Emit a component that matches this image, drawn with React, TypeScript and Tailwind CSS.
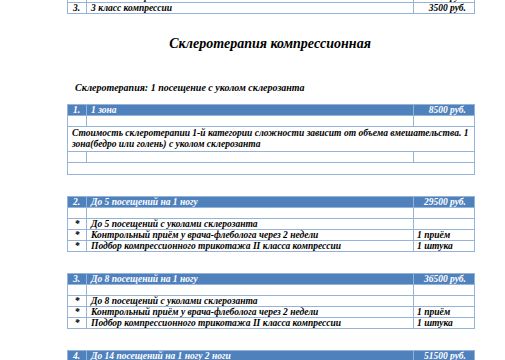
import React from "react";

const cell = "border border-[#95b3d7] p-0 h-[11px] leading-[10px] align-middle";
const head = "bg-[#4f81bd] text-white";

type Item = { text: string; qty?: string };

function Cols() {
  return (
    <colgroup>
      <col className="w-[19px]" />
      <col className="w-[327px]" />
      <col className="w-[61px]" />
    </colgroup>
  );
}

function HeadRow({ n, title, price }: { n: string; title: string; price: string }) {
  return (
    <tr>
      <td className={`${cell} ${head} pl-[5px]`}>{n}</td>
      <td className={`${cell} ${head} pl-[4px]`}>{title}</td>
      <td className={`${cell} ${head} pr-[8px] text-right`}>{price}</td>
    </tr>
  );
}

function EmptyRow() {
  return (
    <tr>
      <td className={cell}></td>
      <td className={cell}></td>
      <td className={cell}></td>
    </tr>
  );
}

function Package({ n, title, price, items }: { n: string; title: string; price: string; items: Item[] }) {
  return (
    <table className="w-[407px] table-fixed border-collapse">
      <Cols />
      <tbody>
        <HeadRow n={n} title={title} price={price} />
        <EmptyRow />
        {items.map((it) => (
          <tr key={it.text}>
            <td className={`${cell} text-center`}>*</td>
            <td className={`${cell} pl-[4px]`}>{it.text}</td>
            <td className={`${cell} pl-[3px]`}>{it.qty}</td>
          </tr>
        ))}
      </tbody>
    </table>
  );
}

export default function App() {
  return (
    <div
      className="h-[360px] w-[505px] overflow-hidden bg-white text-[9.5px] font-bold italic text-black"
      style={{ fontFamily: '"Liberation Serif", "Times New Roman", serif' }}
    >
      <div className="-mt-[9px] pl-[67px]">
        {/* tail of the previous table */}
        <table className="w-[407px] table-fixed border-collapse">
          <Cols />
          <tbody>
            <tr>
              <td className={`${cell} pl-[5px]`}>2.</td>
              <td className={`${cell} pl-[4px]`}>2 класс компрессии</td>
              <td className={`${cell} pr-[8px] text-right`}>3000 руб.</td>
            </tr>
            <tr>
              <td className={`${cell} pl-[5px]`}>3.</td>
              <td className={`${cell} pl-[4px]`}>3 класс компрессии</td>
              <td className={`${cell} pr-[8px] text-right`}>3500 руб.</td>
            </tr>
          </tbody>
        </table>
      </div>

      <h2 className="mt-[21px] pl-[35px] text-center text-[14px] leading-[18px]">Склеротерапия компрессионная</h2>

      <div className="pl-[75px] pt-[29px] text-[10px] leading-[12px]">Склеротерапия: 1 посещение с уколом склерозанта</div>

      <div className="flex flex-col gap-[21px] pl-[67px] pt-[10px]">
        <table className="w-[407px] table-fixed border-collapse">
          <Cols />
          <tbody>
            <HeadRow n="1." title="1 зона" price="8500 руб." />
            <EmptyRow />
            <tr>
              <td colSpan={3} className="border border-[#95b3d7] px-[4px] py-[1px] leading-[11px]">
                Стоимость склеротерапии 1-й категории сложности зависит от объема вмешательства. 1 зона(бедро или голень) с уколом склерозанта
              </td>
            </tr>
            <EmptyRow />
            <tr>
              <td colSpan={3} className="h-[12px] border border-[#95b3d7] p-0"></td>
            </tr>
          </tbody>
        </table>

        <Package
          n="2."
          title="До 5 посещений на 1 ногу"
          price="29500 руб."
          items={[
            { text: "До 5 посещений с уколами склерозанта" },
            { text: "Контрольный приём у врача-флеболога через 2 недели", qty: "1 приём" },
            { text: "Подбор компрессионного трикотажа II класса компрессии", qty: "1 штука" },
          ]}
        />

        <Package
          n="3."
          title="До 8 посещений на 1 ногу"
          price="36500 руб."
          items={[
            { text: "До 8 посещений с уколами склерозанта" },
            { text: "Контрольный приём у врача-флеболога через 2 недели", qty: "1 приём" },
            { text: "Подбор компрессионного трикотажа II класса компрессии", qty: "1 штука" },
          ]}
        />

        <Package
          n="4."
          title="До 14 посещений на 1 ногу 2 ноги"
          price="51500 руб."
          items={[{ text: "До 14 посещений с уколами склерозанта" }]}
        />
      </div>
    </div>
  );
}
